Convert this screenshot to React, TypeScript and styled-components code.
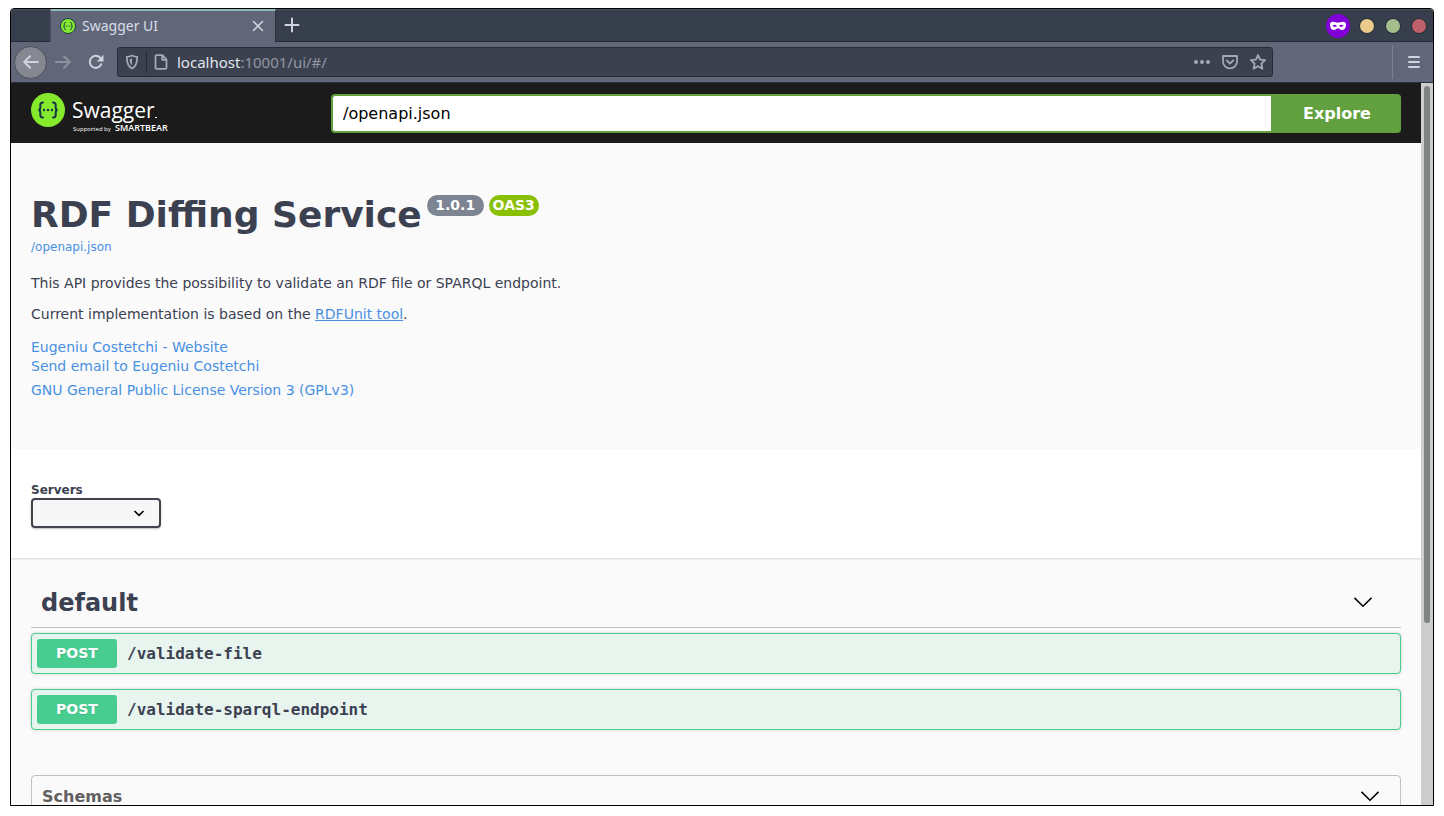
import React from "react";
import styled, { createGlobalStyle } from "styled-components";

const GlobalStyle = createGlobalStyle`
  *, *::before, *::after { box-sizing: border-box; }
  body {
    margin: 0;
    background: #ffffff;
    color: #3b4151;
    font-family: "DejaVu Sans", sans-serif;
    font-size: 14px;
  }
  button, input, select { font-family: inherit; margin: 0; }
  h1, h2, h3, p { margin: 0; }
  svg { display: block; flex: none; }
`;

const Window = styled.div`
  display: flex;
  flex-direction: column;
  height: calc(100vh - 18px);
  margin: 8px 10px 10px;
  border: 1px solid #000000;
  border-radius: 4px 4px 0 0;
  overflow: hidden;
`;

const TabBar = styled.header`
  display: flex;
  flex: none;
  height: 33px;
  padding-left: 39px;
  background: #373e4c;
  box-shadow: inset 0 1px #4b515e, inset 0 -1px #262b36;
  font-family: "Noto Sans", sans-serif;
`;

const Tab = styled.div`
  display: flex;
  align-items: center;
  gap: 6px;
  width: 226px;
  padding: 0 9px 2px;
  background: #616778;
  border-top: 2px solid #8fbcbb;
  border-right: 1px solid #2b303c;
  border-left: 1px solid #4b515e;
  color: #d8dee9;
  font-size: 14px;
`;

const TabTitle = styled.span`
  flex: 1;
`;

const IconButton = styled.button<{ $size?: number; $color?: string }>`
  display: flex;
  flex: none;
  align-items: center;
  justify-content: center;
  width: ${({ $size = 16 }) => $size}px;
  height: ${({ $size = 16 }) => $size}px;
  padding: 0;
  border: 0;
  background: none;
  color: ${({ $color = "#ced3de" }) => $color};
`;

const NewTab = styled(IconButton)`
  width: 32px;
  height: 32px;
`;

const WindowControls = styled.div`
  display: flex;
  align-items: center;
  gap: 12px;
  margin-left: auto;
  padding: 1px 7px 0 0;
`;

const PrivateBadge = styled.span`
  display: flex;
  align-items: center;
  justify-content: center;
  width: 24px;
  height: 24px;
  margin-right: -2px;
  border-radius: 50%;
  background: #8000d7;
`;

const Dot = styled.button<{ $color: string }>`
  width: 14px;
  height: 14px;
  padding: 0;
  border: 0;
  border-radius: 50%;
  background: ${({ $color }) => $color};
  box-shadow: 0 0 0 1px #2a303c;
`;

const Toolbar = styled.div`
  display: flex;
  flex: none;
  align-items: center;
  height: 41px;
  padding: 0 11px 0 3px;
  background: #616778;
  border-bottom: 1px solid #2b303c;
  font-family: "Noto Sans", sans-serif;
`;

const BackButton = styled(IconButton)`
  border: 1px solid #4c505c;
  border-radius: 50%;
  background: #858890;
`;

const AddressBar = styled.div`
  display: flex;
  flex: 1;
  align-items: center;
  height: 30px;
  margin-left: 5px;
  padding: 0 6px;
  border: 1px solid #262b36;
  border-radius: 3px;
  background: #3c4150;
  color: #a4a9b5;
`;

const AddressDivider = styled.span`
  width: 1px;
  height: 22px;
  margin: 0 6px;
  background: #242935;
`;

const Address = styled.span`
  flex: 1;
  margin-left: 8px;
  color: #9197a3;
  font-size: 15px;
`;

const Host = styled.span`
  color: #e1e6ee;
`;

const AddressActions = styled.div`
  display: flex;
  gap: 12px;
`;

const MenuArea = styled.div`
  display: flex;
  align-items: center;
  height: 34px;
  margin-left: 119px;
  padding-left: 13px;
  border-left: 1px solid #7d828f;
`;

const Viewport = styled.div`
  display: flex;
  flex: 1;
  min-height: 0;
`;

const Page = styled.main`
  flex: 1;
  min-width: 0;
  overflow: hidden;
  background: #fafafa;
`;

const ScrollTrack = styled.div`
  flex: none;
  width: 12px;
  padding: 3px;
  background: #cdcdcd;
`;

const ScrollThumb = styled.div`
  width: 6px;
  height: 75%;
  border-radius: 3px;
  background: #7f8383;
`;

const TopBar = styled.div`
  display: flex;
  height: 60px;
  padding: 10px 20px;
  background: #1b1b1b;
`;

const LogoLink = styled.a`
  flex: none;
  width: 300px;
  text-decoration: none;
`;

const UrlForm = styled.form`
  display: flex;
  flex: 1;
  margin-top: 1px;
`;

const UrlInput = styled.input`
  flex: 1;
  min-width: 0;
  padding: 0 10px;
  border: 2px solid #62a03f;
  border-right: 0;
  border-radius: 4px 0 0 4px;
  background: #ffffff;
  color: #000000;
  font-size: 16px;
  outline: none;
`;

const ExploreButton = styled.button`
  width: 130px;
  padding: 0 0 0 2px;
  border: 0;
  border-radius: 0 4px 4px 0;
  background: #62a03f;
  color: #ffffff;
  font-size: 16px;
  font-weight: 700;
`;

const Info = styled.section`
  padding: 50px 20px 49px;
`;

const TitleRow = styled.div`
  display: flex;
  align-items: flex-start;
  gap: 5px;
`;

const Title = styled.h1`
  font-size: 36px;
  line-height: 44px;
`;

const Badge = styled.span<{ $color: string; $width: number }>`
  width: ${({ $width }) => $width}px;
  margin-top: 2px;
  border-radius: 11px;
  background: ${({ $color }) => $color};
  color: #ffffff;
  font-size: 14px;
  font-weight: 700;
  line-height: 21px;
  text-align: center;
`;

const Link = styled.a<{ $underline?: boolean }>`
  color: #4990e2;
  text-decoration: ${({ $underline }) => ($underline ? "underline" : "none")};
`;

const SpecLink = styled(Link)`
  display: block;
  width: fit-content;
  font-size: 12px;
  line-height: 20px;
`;

const Description = styled.div`
  display: grid;
  gap: 14px;
  margin: 18px 0 15px;
  line-height: 17px;
`;

const Contact = styled.div`
  display: grid;
  justify-items: start;
  margin-bottom: 5px;
  line-height: 19px;
`;

const License = styled.div`
  line-height: 19px;
`;

const Servers = styled.section`
  position: relative;
  display: grid;
  justify-items: start;
  padding: 33px 20px 30px;
  background: #ffffff;
  box-shadow: 0 1px 2px rgba(0, 0, 0, 0.15);
`;

const ServersLabel = styled.label`
  font-size: 12px;
  font-weight: 700;
  line-height: 16px;
`;

const SelectWrap = styled.div`
  position: relative;
  width: 130px;

  svg {
    position: absolute;
    top: 9px;
    right: 16px;
    pointer-events: none;
  }
`;

const Select = styled.select`
  display: block;
  width: 100%;
  height: 30px;
  border: 2px solid #41444e;
  border-radius: 4px;
  background: #f7f7f7;
  box-shadow: 0 1px 2px rgba(0, 0, 0, 0.25);
  appearance: none;
`;

const Operations = styled.section`
  padding: 20px 20px 0;
`;

const TagHeader = styled.div`
  display: flex;
  align-items: center;
  justify-content: space-between;
  height: 50px;
  margin-bottom: 5px;
  padding: 0 28px 0 10px;
  border-bottom: 1px solid #bfc0c5;
`;

const TagTitle = styled.h2`
  font-size: 24px;
  line-height: 28px;
`;

const OperationList = styled.div`
  display: grid;
  gap: 15px;
`;

const Operation = styled.button`
  display: flex;
  align-items: center;
  gap: 10px;
  width: 100%;
  padding: 5px;
  border: 1px solid #49cc90;
  border-radius: 4px;
  background: #e8f4ee;
  box-shadow: 0 0 3px rgba(0, 0, 0, 0.19);
  color: #3b4151;
`;

const Method = styled.span`
  width: 80px;
  border-radius: 3px;
  background: #49cc90;
  color: #ffffff;
  font-size: 14px;
  font-weight: 700;
  line-height: 29px;
  text-align: center;
  text-shadow: 0 1px 0 rgba(0, 0, 0, 0.1);
`;

const Path = styled.span`
  font-family: "DejaVu Sans Mono", monospace;
  font-size: 16px;
  font-weight: 700;
`;

const Schemas = styled.section`
  margin: 45px 20px 30px;
  border: 1px solid #c0c1c4;
  border-radius: 4px;
`;

const SchemasHeader = styled.div`
  display: flex;
  align-items: center;
  justify-content: space-between;
  height: 42px;
  padding: 0 20px 0 10px;
`;

const SchemasTitle = styled.h3`
  color: #606060;
  font-size: 16px;
  line-height: 20px;
`;

const Braces = () => (
  <g fill="none" stroke="#173647" strokeWidth="2" strokeLinecap="round">
    <path d="M12 9.500c-2.500 0-2.700 1-2.700 2.500v2.500c0 1.500-.5 2.500-2 2.500 1.500 0 2 1 2 2.500V22c0 1.500.2 2.500 2.700 2.500" />
    <path d="M22 9.500c2.500 0 2.700 1 2.700 2.500v2.500c0 1.500.5 2.500 2 2.500-1.500 0-2 1-2 2.500V22c0 1.500-.2 2.500-2.700 2.500" />
    <path d="M13 17h.01M17 17h.01M21 17h.01" strokeWidth="2.400" />
  </g>
);

const Favicon = () => (
  <svg width="16" height="16" viewBox="0 0 34 34">
    <circle cx="17" cy="17" r="16" fill="#85ea2d" stroke="#173647" strokeWidth="2" />
    <Braces />
  </svg>
);

const SwaggerLogo = () => (
  <svg width="150" height="42" viewBox="0 0 150 42" role="img" aria-label="Swagger, supported by SmartBear">
    <circle cx="17" cy="17" r="17" fill="#85ea2d" />
    <Braces />
    <g fill="#ffffff" fontFamily="Open Sans, sans-serif">
      <text x="41" y="25" fontSize="21">Swagger</text>
      <path d="M124 24.500h2" stroke="#ffffff" />
      <text x="42" y="38" fontSize="6">Supported by</text>
      <text x="84" y="38" fontSize="9" fontWeight="600">SMARTBEAR</text>
    </g>
  </svg>
);

const stroke = {
  fill: "none",
  stroke: "currentColor",
  strokeLinecap: "round" as const,
  strokeLinejoin: "round" as const,
};

const Glyph = ({ d, fill, width = 2 }: { d?: string; fill?: string; width?: number }) => (
  <svg width="16" height="16" viewBox="0 0 16 16" {...stroke} strokeWidth={width}>
    {d && <path d={d} />}
    {fill && <path d={fill} fill="currentColor" stroke="none" />}
  </svg>
);

const Mask = () => (
  <svg width="16" height="10" viewBox="0 0 16 10">
    <path
      fill="#ffffff"
      fillRule="evenodd"
      d="M0 3.500C0 1.500 1.200.7 3 .7c2 0 3.200.9 5 .9s3-.9 5-.9c1.800 0 3 .8 3 2.800C16 6.800 14.300 9 12 9c-2 0-2.800-1.700-4-1.700S6 9 4 9C1.700 9 0 6.800 0 3.500zM2.500 4.800C3.300 6 6 6.200 7 4.900 5.800 3.300 3.500 3.300 2.500 4.800zM13.500 4.800C12.700 6 10 6.200 9 4.900c1.200-1.600 3.500-1.600 4.500-.1z"
    />
  </svg>
);

const Chevron = () => (
  <svg width="20" height="12" viewBox="0 0 20 12" fill="none" stroke="#000000" strokeWidth="1.500">
    <path d="M1.500 .9 10 9.300l8.500-8.400" />
  </svg>
);

const muted = "#a4a9b5";
const operations = ["/validate-file", "/validate-sparql-endpoint"];

export default function App() {
  return (
    <>
      <GlobalStyle />
      <Window>
        <TabBar>
          <Tab>
            <Favicon />
            <TabTitle>Swagger UI</TabTitle>
            <IconButton aria-label="Close tab">
              <Glyph d="M3.500 3.500l9 9M12.500 3.500l-9 9" width={1.6} />
            </IconButton>
          </Tab>
          <NewTab aria-label="New tab">
            <Glyph d="M8 1.500v13M1.500 8h13" />
          </NewTab>
          <WindowControls>
            <PrivateBadge><Mask /></PrivateBadge>
            <Dot $color="#ebcb8b" aria-label="Minimize" />
            <Dot $color="#a3be8c" aria-label="Maximize" />
            <Dot $color="#bf616a" aria-label="Close" />
          </WindowControls>
        </TabBar>
        <Toolbar>
          <BackButton $size={33} aria-label="Back">
            <Glyph d="M15 8H1.500M7 2.200 1.200 8 7 13.800" />
          </BackButton>
          <IconButton $size={32} $color="#8c919e" aria-label="Forward">
            <Glyph d="M1 8h13.500M9 2.200 14.800 8 9 13.800" />
          </IconButton>
          <IconButton $size={33} aria-label="Reload">
            <Glyph d="M13.300 10.200A6 6 0 1 1 12.200 3.800" fill="M15.500.8v6.700H8.800z" />
          </IconButton>
          <AddressBar>
            <Glyph d="M8 1.500c-2 1-4 1.300-5.200 1.300C2.800 9 4 12.700 8 14.500c4-1.800 5.200-5.500 5.200-11.700C12 2.800 10 2.500 8 1.500z" fill="M8 4.500v7c-1.800-1.500-2.300-3.500-2.300-6.400z" width={1.8} />
            <AddressDivider />
            <Glyph d="M3.500 1.200h6l4 4.300v8.300q0 1-1 1h-9q-1 0-1-1V2.200q0-1 1-1zM9.200 1.500v4.300h4.200" width={1.8} />
            <Address><Host>localhost</Host>:10001/ui/#/</Address>
            <AddressActions>
              <IconButton $color={muted} aria-label="Page actions">
                <Glyph fill="M0 8a2 2 0 1 1 4 0 2 2 0 1 1-4 0zM6 8a2 2 0 1 1 4 0 2 2 0 1 1-4 0zM12 8a2 2 0 1 1 4 0 2 2 0 1 1-4 0z" />
              </IconButton>
              <IconButton $color={muted} aria-label="Save to Pocket">
                <Glyph d="M1 2h14v5.500a7 6.800 0 0 1-14 0zM4.800 6.500 8 9.600l3.200-3.100" width={1.8} />
              </IconButton>
              <IconButton $color={muted} aria-label="Bookmark">
                <Glyph d="M8 1l2.100 4.600 5 .6-3.700 3.400 1 5L8 12.200l-4.400 2.400 1-5L.9 6.200l5-.6z" width={1.8} />
              </IconButton>
            </AddressActions>
          </AddressBar>
          <MenuArea>
            <IconButton aria-label="Open menu">
              <Glyph d="M3 3h10M3 8h10M3 13h10" />
            </IconButton>
          </MenuArea>
        </Toolbar>
        <Viewport>
          <Page>
            <TopBar>
              <LogoLink href="#"><SwaggerLogo /></LogoLink>
              <UrlForm onSubmit={(e) => e.preventDefault()}>
                <UrlInput aria-label="Specification URL" defaultValue="/openapi.json" />
                <ExploreButton>Explore</ExploreButton>
              </UrlForm>
            </TopBar>
            <Info>
              <TitleRow>
                <Title>RDF Diffing Service</Title>
                <Badge $color="#7d8492" $width={57}>1.0.1</Badge>
                <Badge $color="#89bf04" $width={50}>OAS3</Badge>
              </TitleRow>
              <SpecLink href="#">/openapi.json</SpecLink>
              <Description>
                <p>This API provides the possibility to validate an RDF file or SPARQL endpoint.</p>
                <p>Current implementation is based on the <Link $underline href="#">RDFUnit tool</Link>.</p>
              </Description>
              <Contact>
                <Link href="#">Eugeniu Costetchi - Website</Link>
                <Link href="#">Send email to Eugeniu Costetchi</Link>
              </Contact>
              <License>
                <Link href="#">GNU General Public License Version 3 (GPLv3)</Link>
              </License>
            </Info>
            <Servers>
              <ServersLabel htmlFor="servers">Servers</ServersLabel>
              <SelectWrap>
                <Select id="servers"><option value="" /></Select>
                <svg width="12" height="12" viewBox="0 0 12 12" fill="none" stroke="#000000" strokeWidth="1.600">
                  <path d="M1.500 4 6 8.300 10.500 4" />
                </svg>
              </SelectWrap>
            </Servers>
            <Operations>
              <TagHeader>
                <TagTitle>default</TagTitle>
                <Chevron />
              </TagHeader>
              <OperationList>
                {operations.map((path) => (
                  <Operation key={path}>
                    <Method>POST</Method>
                    <Path>{path}</Path>
                  </Operation>
                ))}
              </OperationList>
            </Operations>
            <Schemas>
              <SchemasHeader>
                <SchemasTitle>Schemas</SchemasTitle>
                <Chevron />
              </SchemasHeader>
            </Schemas>
          </Page>
          <ScrollTrack><ScrollThumb /></ScrollTrack>
        </Viewport>
      </Window>
    </>
  );
}
